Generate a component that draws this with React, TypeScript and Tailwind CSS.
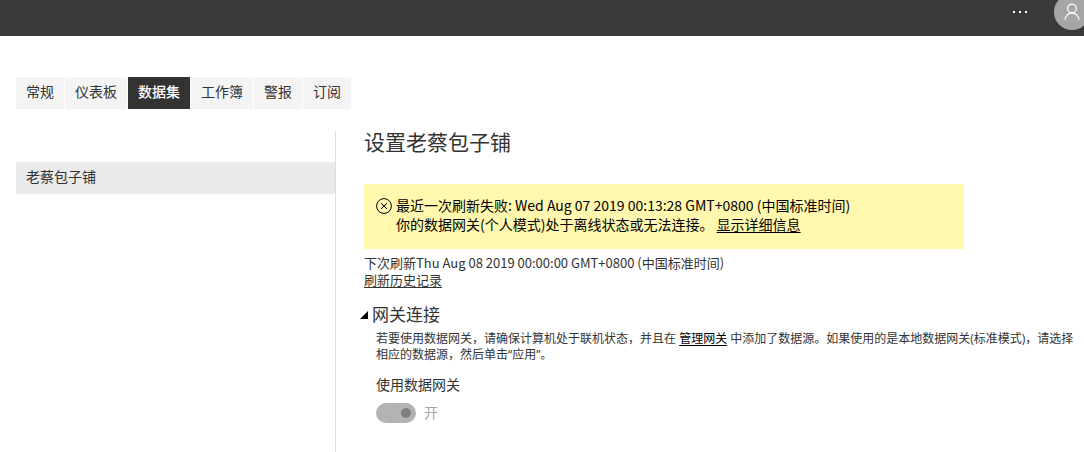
import type { ReactNode } from "react";

const tabs = ["常规", "仪表板", "数据集", "工作簿", "警报", "订阅"];

function TopBar() {
  return (
    <header className="flex h-9 items-start justify-end gap-6 overflow-hidden bg-[#3b3a39]">
      <button type="button" aria-label="更多" className="flex h-6 w-5 items-center justify-center">
        <svg width="16" height="2" viewBox="0 0 16 2" fill="#ffffff">
          <rect x="1" width="2" height="2" />
          <rect x="7" width="2" height="2" />
          <rect x="13" width="2" height="2" />
        </svg>
      </button>
      <button
        type="button"
        aria-label="个人资料"
        className="-mt-1.5 -mr-1.5 flex size-9 items-center justify-center rounded-full bg-[#a6a6a6]"
      >
        <svg width="18" height="18" viewBox="0 0 18 18" fill="none" stroke="#ffffff" strokeWidth="1.2">
          <circle cx="9" cy="5.5" r="4.4" />
          <path d="M2 17.2C2 13 5 10.1 9 10.1s7 2.9 7 7.1" />
        </svg>
      </button>
    </header>
  );
}

function Tabs({ active }: { active: string }) {
  return (
    <nav className="flex gap-px">
      {tabs.map((tab) => (
        <button
          key={tab}
          type="button"
          className={`h-8 px-2.5 pb-0.5 text-sm ${tab === active ? "bg-[#333333] font-medium text-white" : "bg-[#f4f4f4]"}`}
        >
          {tab}
        </button>
      ))}
    </nav>
  );
}

function TextLink({ children }: { children: ReactNode }) {
  return (
    <a href="#" className="underline underline-offset-2">
      {children}
    </a>
  );
}

function RefreshStatus() {
  return (
    <div className="mt-[31px] font-['Noto_Sans_CJK_SC',sans-serif]">
      <div className="flex max-w-[600px] gap-1 bg-[#fff8ae] px-3 pt-3 pb-[15px] text-sm leading-[19px] text-black">
        <svg className="mt-0.5 shrink-0" width="16" height="16" viewBox="0 0 16 16" fill="none" stroke="currentColor">
          <circle cx="8" cy="8" r="7.4" />
          <path d="M5 5l6 6M11 5l-6 6" />
        </svg>
        <div>
          <p>最近一次刷新失败: Wed Aug 07 2019 00:13:28 GMT+0800 (中国标准时间)</p>
          <p>
            你的数据网关(个人模式)处于离线状态或无法连接。 <TextLink>显示详细信息</TextLink>
          </p>
        </div>
      </div>
      <div className="mt-[5px] text-[13px] leading-[17px]">
        <p>下次刷新Thu Aug 08 2019 00:00:00 GMT+0800 (中国标准时间)</p>
        <TextLink>刷新历史记录</TextLink>
      </div>
    </div>
  );
}

function GatewaySection() {
  return (
    <section className="mt-[15px]">
      <h2 className="-ml-1 flex items-center gap-1 text-[17px] leading-6">
        <svg width="8" height="8" viewBox="0 0 8 8" fill="#000000">
          <path d="M8 0v8H0z" />
        </svg>
        网关连接
      </h2>
      <div className="mt-1 ml-3">
        <p className="text-xs">
          若要使用数据网关，请确保计算机处于联机状态，并且在{" "}
          <a href="#" className="text-black underline underline-offset-2">
            管理网关
          </a>{" "}
          中添加了数据源。如果使用的是本地数据网关(标准模式)，请选择相应的数据源，然后单击“应用”。
        </p>
        <label htmlFor="use-gateway" className="mt-3 block text-sm">
          使用数据网关
        </label>
        <div className="mt-2 flex items-center gap-2">
          <input
            id="use-gateway"
            type="checkbox"
            role="switch"
            defaultChecked
            disabled
            className="flex h-5 w-10 appearance-none items-center rounded-full bg-[#b3b3b3] px-[5px] before:size-2.5 before:rounded-full before:bg-[#7f7f7f] checked:justify-end"
          />
          <span className="text-sm text-[#a6a6a6]">开</span>
        </div>
      </div>
    </section>
  );
}

export default function App() {
  return (
    <div className="flex min-h-screen flex-col bg-white font-['Open_Sans','Noto_Sans_CJK_SC',sans-serif] text-[#333333]">
      <TopBar />
      <div className="mt-[41px] pl-4">
        <Tabs active="数据集" />
      </div>
      <div className="mt-[22px] flex grow pl-4">
        <aside className="w-80 shrink-0 border-r border-[#dddddd] pt-[31px]">
          <button type="button" className="h-8 w-full bg-[#eaeaea] px-2.5 pb-0.5 text-left text-sm">
            老蔡包子铺
          </button>
        </aside>
        <main className="grow pr-2 pl-7">
          <h1 className="text-[21px] leading-[22px]">设置老蔡包子铺</h1>
          <RefreshStatus />
          <GatewaySection />
        </main>
      </div>
    </div>
  );
}
